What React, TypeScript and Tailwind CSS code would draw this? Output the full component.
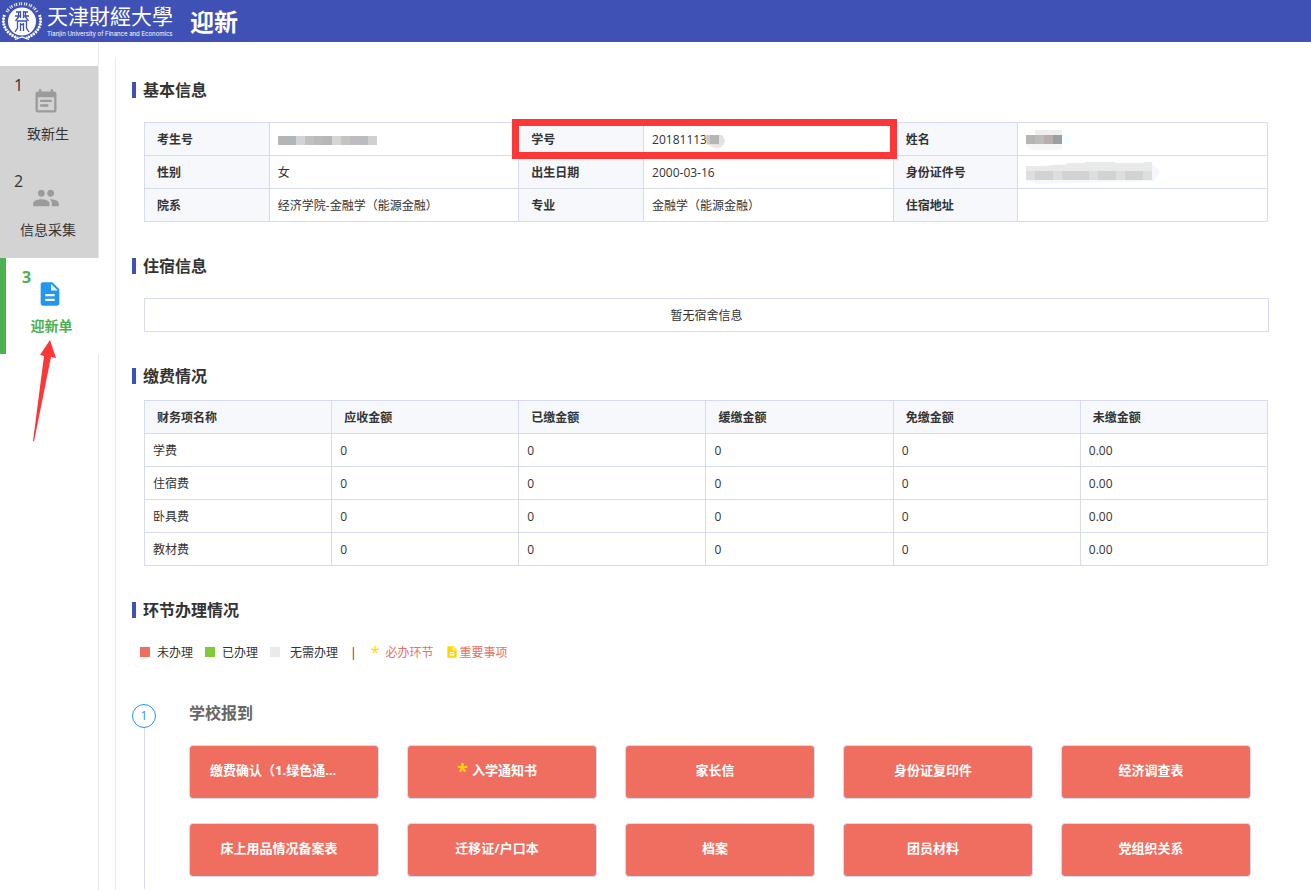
import React from 'react';
import clsx from 'clsx';
import { MdDescription, MdEventNote, MdPeople } from 'react-icons/md';
import type { IconType } from 'react-icons';

interface Step {
  no: number;
  label: string;
  icon: IconType;
  active?: boolean;
}

interface Tile {
  label: string;
  required?: boolean;
  cut?: boolean;
}

const steps: Step[] = [
  { no: 1, label: '致新生', icon: MdEventNote },
  { no: 2, label: '信息采集', icon: MdPeople },
  { no: 3, label: '迎新单', icon: MdDescription, active: true },
];

const feeHeads = ['财务项名称', '应收金额', '已缴金额', '缓缴金额', '免缴金额', '未缴金额'];

const fees = [
  ['学费', '0', '0', '0', '0', '0.00'],
  ['住宿费', '0', '0', '0', '0', '0.00'],
  ['卧具费', '0', '0', '0', '0', '0.00'],
  ['教材费', '0', '0', '0', '0', '0.00'],
];

const tiles: Tile[] = [
  { label: '缴费确认（1.绿色通...', cut: true },
  { label: '入学通知书', required: true },
  { label: '家长信' },
  { label: '身份证复印件' },
  { label: '经济调查表' },
  { label: '床上用品情况备案表' },
  { label: '迁移证/户口本' },
  { label: '档案' },
  { label: '团员材料' },
  { label: '党组织关系' },
];

const Emblem = () => (
  <svg viewBox="0 0 44 42" className="h-[42px] w-11 shrink-0" fill="none" aria-hidden="true">
    {/* laurel */}
    <path d="M4.500 15C1 24 6 34 18 38M39.500 15c3.500 9-1.500 19-13.500 23" stroke="#fff" strokeWidth="3" strokeDasharray="1.8 1.1" />
    <path d="M4.500 15C1 24 6 34 18 38M39.500 15c3.500 9-1.500 19-13.500 23" stroke="#fff" strokeWidth="0.8" />
    <path d="M15 39.500l7-2.500 7 2.500" stroke="#fff" strokeWidth="1.2" />
    {/* ring of small characters */}
    <path d="M7 12C12 1 32 1 37 12" stroke="#fff" strokeWidth="3" strokeDasharray="1 0.8 1.400 1.8" opacity="0.85" />
    <circle cx="22" cy="21.500" r="14" fill="#fff" />
    <path
      d="M16 12h4.500M23.500 12H28M15 16h5.500M23.500 16H29M18.500 12v5l-3 4M25.500 12v5l3 4M20.500 11v7M23.500 11v7M17 21h10M17.500 21v7l-2.500 4M26.500 21v7l2.500 4M20.500 23v8M23.500 23v8M20.500 24.500h3"
      stroke="#3f51b5"
      strokeWidth="1.300"
    />
  </svg>
);

// Blurred-out personal data
const Mosaic: React.FC<{ colors: string[] }> = ({ colors }) => (
  <svg width={colors.length * 9} height="9" className="block" aria-hidden="true">
    {colors.map((c, i) => (
      <rect key={i} x={i * 9} y="0" width="9" height="9" fill={c} />
    ))}
  </svg>
);

const SectionTitle: React.FC<{ children: React.ReactNode; className?: string }> = ({ children, className }) => (
  <h2 className={clsx('flex items-center gap-[7px] text-base leading-6 font-bold text-[#333]', className)}>
    <span className="h-4 w-1 bg-[#3f51b5]" />
    {children}
  </h2>
);

const Th: React.FC<{ children: React.ReactNode }> = ({ children }) => (
  <th className="h-[33px] border border-[#d6dbf0] bg-[#f6f8fc] pt-0.5 pl-3 text-left font-bold">{children}</th>
);

const Td: React.FC<{ children?: React.ReactNode }> = ({ children }) => (
  <td className="h-[33px] border border-[#d6dbf0] pt-0.5 pl-2">{children}</td>
);

const Sidebar = () => (
  <nav className="w-[99px] shrink-0 border-r border-[#e4eaec] pt-6">
    {steps.map(({ no, label, icon: Icon, active }) => (
      <a
        key={no}
        href={`#step-${no}`}
        className={clsx(
          'block h-24 pt-2',
          active ? '-mr-px border-l-6 border-[#4caf50] bg-white font-bold text-[#4caf50]' : 'bg-[#d3d3d3] text-[#333]'
        )}
      >
        <span className={clsx('flex items-start', active ? 'pl-4' : 'pl-[14px]')}>
          <span className={clsx('text-base leading-[22px]', active ? 'w-[14px]' : 'w-[18px]')}>{no}</span>
          <Icon className={clsx('mt-[14px] h-7 w-7', active ? 'text-[#2196f3]' : 'text-[#9b9b9b]')} />
        </span>
        <span className="mt-2 block pr-0.5 text-center text-sm leading-5">{label}</span>
      </a>
    ))}
    <svg viewBox="0 0 98 102" className="relative -mt-[14px] h-[102px] w-[98px]" aria-hidden="true">
      <path d="M50 0L56 18L51 17L34 101.500L33 101L44 16L40 15Z" fill="#fc3737" />
    </svg>
  </nav>
);

const BasicInfo = () => (
  <div className="relative">
    <table className="w-full table-fixed border-collapse">
      <colgroup>
        <col className="w-1/9" />
        <col className="w-2/9" />
        <col className="w-1/9" />
        <col className="w-2/9" />
        <col className="w-1/9" />
        <col className="w-2/9" />
      </colgroup>
      <tbody>
        <tr>
          <Th>考生号</Th>
          <Td>
            <Mosaic
              colors={['#b5b5b6', '#b1b6ba', '#d3d3d5', '#c1c1c1', '#bababb', '#b6b6b6', '#d5d5d3', '#c5c5bf', '#bfbbc0', '#babdc0', '#d0d0d0']}
            />
          </Td>
          <Th>学号</Th>
          <Td>
            <span className="flex items-center">
              20181113
              <svg width="22" height="18" className="-ml-0.5 block" aria-hidden="true">
                <path d="M2 10h18c-2 10-14 10-18 0z" fill="#fde3e3" />
                <path d="M0 4h17l3 5-2 5H2z" fill="#dfe3e6" />
                <path d="M1 4h5v9H2z" fill="#c9c9c9" />
                <path d="M5 4h9v9H5z" fill="#b5b5b3" />
              </svg>
            </span>
          </Td>
          <Th>姓名</Th>
          <Td>
            <svg width="45" height="20" className="block" aria-hidden="true">
              <path d="M9 0h27v5H9z" fill="#efeff0" />
              <path d="M0 14h36v6H9c-5 0-8-2-9-6z" fill="#f6f6f7" />
              <path d="M36 5h9v9h-9z" fill="#f5ffff" />
              <path d="M0 5h9v9H0z" fill="#b6b5b4" />
              <path d="M9 5h9v9H9z" fill="#bcbdb8" />
              <path d="M18 5h9v9h-9z" fill="#b9aeae" />
              <path d="M27 5h9v9h-9z" fill="#9d9da4" />
            </svg>
          </Td>
        </tr>
        <tr>
          <Th>性别</Th>
          <Td>女</Td>
          <Th>出生日期</Th>
          <Td>2000-03-16</Td>
          <Th>身份证件号</Th>
          <Td>
            <svg width="134" height="22" className="block" aria-hidden="true">
              <path d="M0 5L25 3L48 1H126L134 10L128 19L10 22L0 18Z" fill="#f5f7fb" />
              <path d="M0 4h25V3h16V1h17V0h32v1h28V0h8v10H0z" fill="#e8e9e9" />
              <path d="M0 9h126v9H0z" fill="#d3d2d2" />
              <path d="M0 9h9v9H0zM27 9h9v9h-9zM63 9h9v9h-9zM90 9h9v9h-9zM117 9h9v9h-9z" fill="#dedede" />
            </svg>
          </Td>
        </tr>
        <tr>
          <Th>院系</Th>
          <Td>经济学院-金融学（能源金融）</Td>
          <Th>专业</Th>
          <Td>金融学（能源金融）</Td>
          <Th>住宿地址</Th>
          <Td />
        </tr>
      </tbody>
    </table>
    {/* highlight round the student number */}
    <div className="absolute -top-[3px] left-1/3 -ml-[7px] h-10 w-[calc(100%/3+11px)] border-7 border-[#fc3737]" />
  </div>
);

const Legend = () => (
  <div className="flex h-5 items-center pl-2">
    <span className="mr-3 flex items-center gap-[7px]">
      <i className="h-2.5 w-2.5 bg-[#ef6e60]" />
      <span className="pt-0.5">未办理</span>
    </span>
    <span className="mr-3 flex items-center gap-[7px]">
      <i className="h-2.5 w-2.5 bg-[#80cb35]" />
      <span className="pt-0.5">已办理</span>
    </span>
    <span className="mr-3 flex items-center gap-2.5">
      <i className="h-2.5 w-2.5 bg-[#e9eaee]" />
      <span className="pt-0.5">无需办理</span>
    </span>
    <span className="pt-0.5">|</span>
    <span className="ml-[14px] flex items-center gap-1.5 text-[#ef6e60]">
      <span className="text-base text-[#ffd600]">*</span>
      <span className="pt-0.5">必办环节</span>
    </span>
    <span className="ml-3 flex items-center text-[#ef6e60]">
      <MdDescription className="h-3.5 w-3.5 text-[#ffd600]" />
      <span className="pt-0.5">重要事项</span>
    </span>
  </div>
);

export default function App() {
  return (
    <div className="flex min-h-screen flex-col bg-white font-['Open_Sans','Noto_Sans_CJK_SC',sans-serif] text-xs text-[#333]">
      <header className="flex h-[42px] items-center bg-[#3f51b5] text-white">
        <Emblem />
        <div className="ml-[3px] w-[143px]">
          <div className="font-['Liberation_Sans','Noto_Sans_CJK_TC',sans-serif] text-[21px] leading-[26px] whitespace-nowrap">
            天津財經大學
          </div>
          <div className="font-['Inter',sans-serif] text-[6px] leading-2 whitespace-nowrap">
            Tianjin University of Finance and Economics
          </div>
        </div>
        <h1 className="pt-0.5 text-2xl font-bold">迎新</h1>
      </header>

      <div className="flex flex-1">
        <Sidebar />
        <main className="mt-4 ml-4 min-w-0 flex-1 border-l border-[#e6e9ee] pt-5 pl-4">
          <section className="mb-8">
            <SectionTitle className="mb-5">基本信息</SectionTitle>
            <div className="mr-[43px] ml-3">
              <BasicInfo />
            </div>
          </section>

          <section className="mb-8">
            <SectionTitle className="mb-5">住宿信息</SectionTitle>
            <p className="mr-[42px] ml-3 border border-[#d6dbf0] pt-0.5 text-center leading-[30px]">暂无宿舍信息</p>
          </section>

          <section className="mb-8">
            <SectionTitle className="mb-3">缴费情况</SectionTitle>
            <div className="mr-[43px] ml-3">
              <table className="w-full table-fixed border-collapse">
                <thead>
                  <tr>
                    {feeHeads.map((h) => (
                      <Th key={h}>{h}</Th>
                    ))}
                  </tr>
                </thead>
                <tbody>
                  {fees.map((row) => (
                    <tr key={row[0]}>
                      {row.map((cell, i) => (
                        <Td key={i}>{cell}</Td>
                      ))}
                    </tr>
                  ))}
                </tbody>
              </table>
            </div>
          </section>

          <section>
            <SectionTitle className="mb-5">环节办理情况</SectionTitle>
            <Legend />
            <div className="mt-[39px] flex">
              <div className="flex w-6 shrink-0 flex-col items-center pt-[3px]">
                <span className="h-6 w-6 rounded-full border border-[#2196f3] text-center leading-[22px] text-[#2196f3]">1</span>
                <span className="w-px flex-1 bg-[#d6dbf0]" />
              </div>
              <div className="mr-[60px] ml-[33px] min-w-0 flex-1 pb-3">
                <h3 className="text-base leading-6 font-bold text-[#666]">学校报到</h3>
                <div className="mt-5 grid grid-cols-5 gap-x-7 gap-y-6">
                  {tiles.map((tile) => (
                    <button
                      key={tile.label}
                      type="button"
                      className="flex h-[54px] items-center justify-center rounded border border-[#d6dbf0] bg-[#ef6e60] pr-2.5 pb-0.5 text-[13px] font-bold text-white"
                    >
                      {tile.required && <span className="mr-1 text-xl leading-5 text-[#ffd600]">*</span>}
                      <span className={clsx('whitespace-nowrap', tile.cut && 'w-[138px] text-left')}>{tile.label}</span>
                    </button>
                  ))}
                </div>
              </div>
            </div>
          </section>
        </main>
      </div>
    </div>
  );
}
